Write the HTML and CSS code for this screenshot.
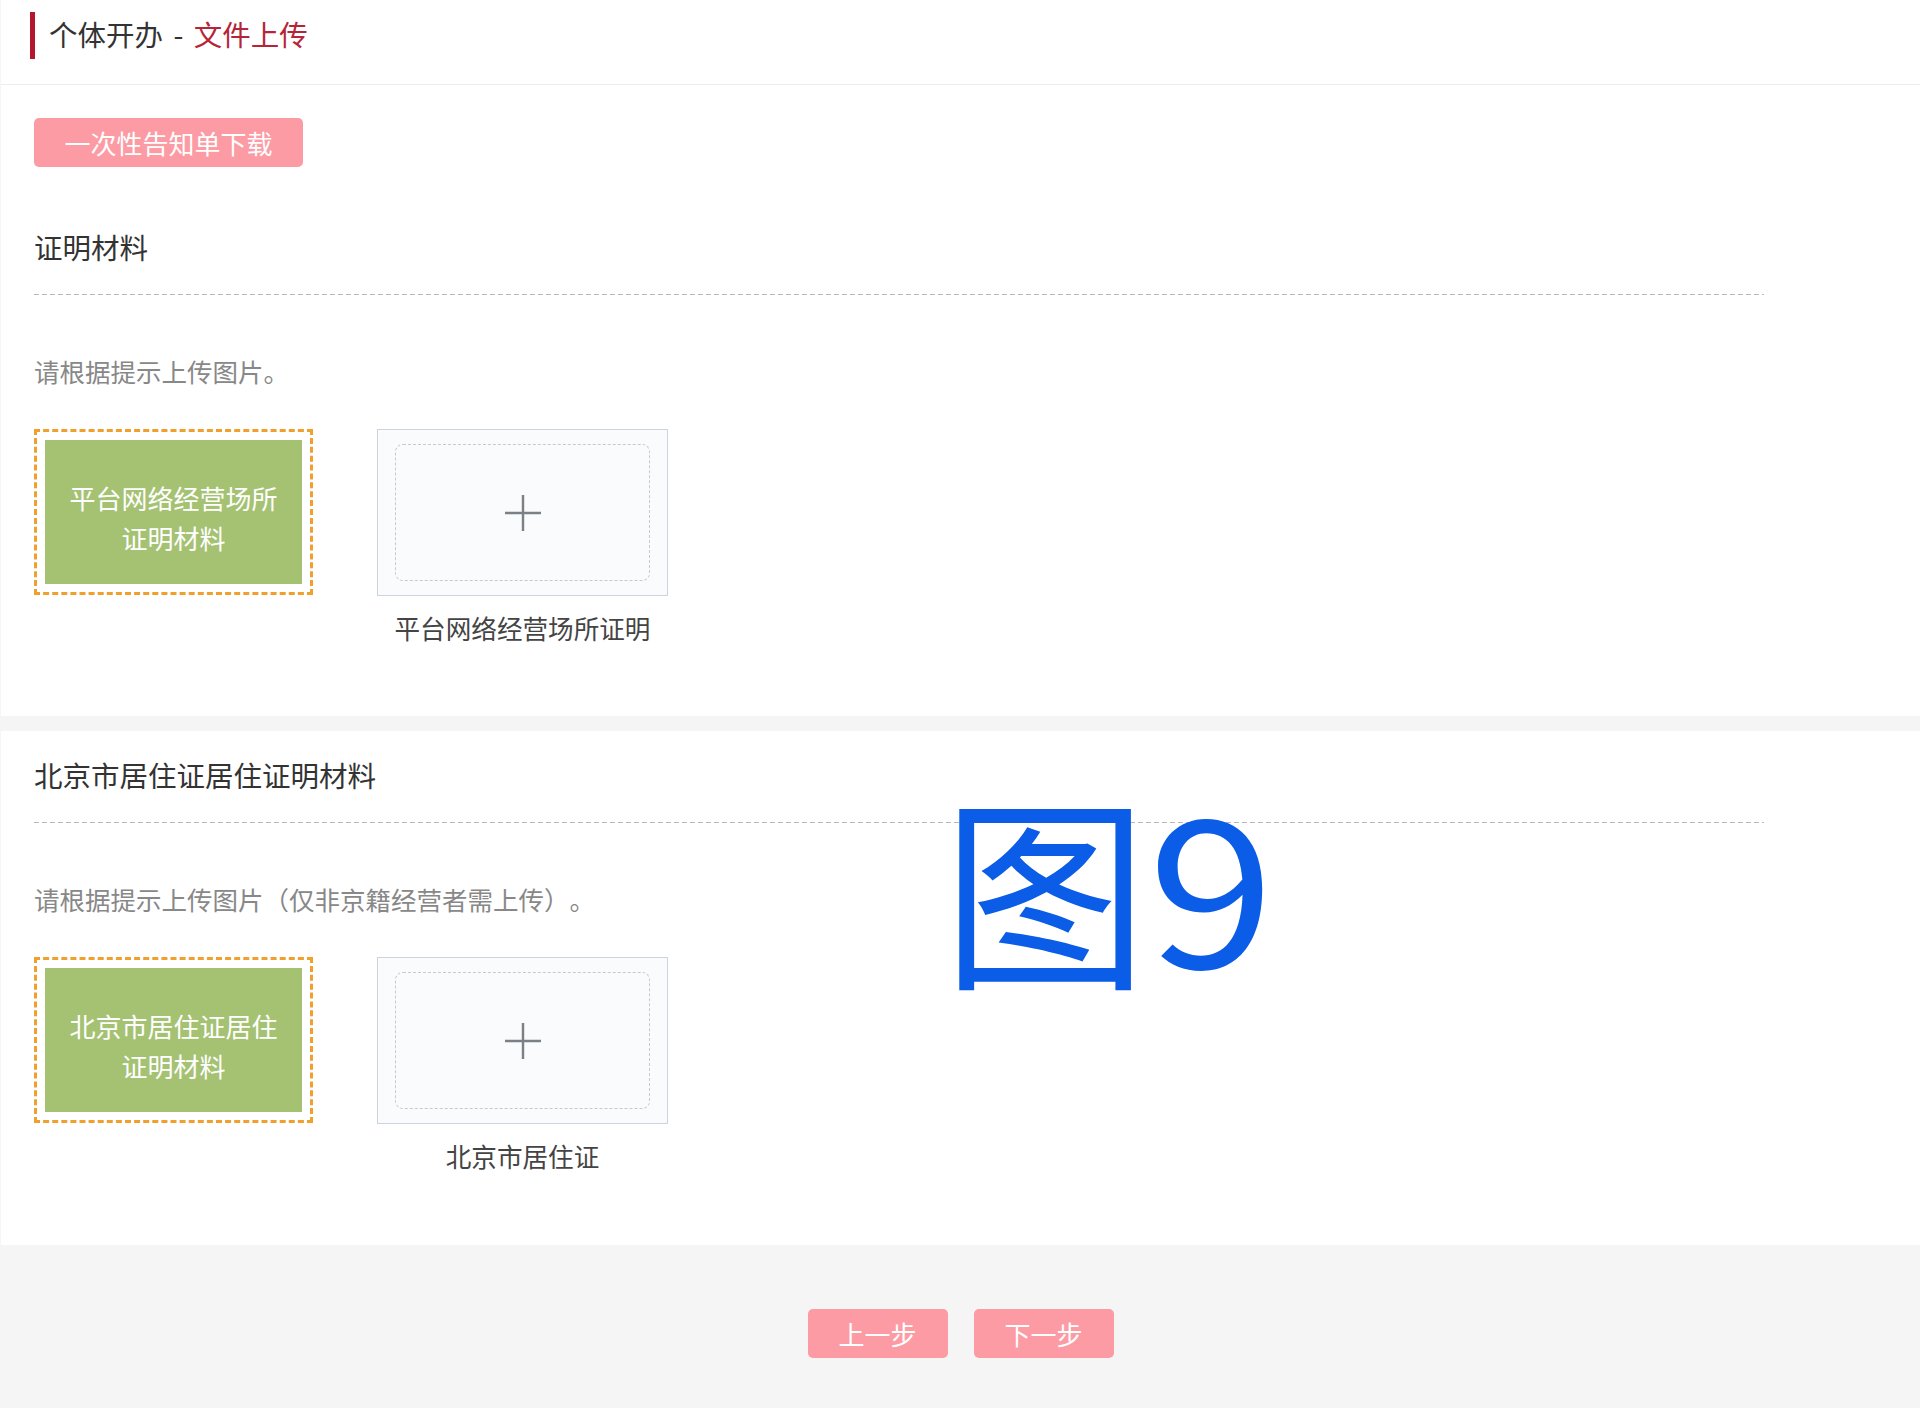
FILE: index.html
```html
<!DOCTYPE html>
<html lang="zh-CN">
<head>
<meta charset="utf-8">
<title>个体开办 - 文件上传</title>
<link rel="stylesheet" href="styles.css">
</head>
<body>
<div class="page">
  <header class="header">
    <span class="header-bar"></span>
    <h1 class="header-title">个体开办 - <span class="header-accent">文件上传</span></h1>
  </header>

  <section class="section section-first">
    <button class="btn-notice" type="button">一次性告知单下载</button>
    <div class="block">
      <h2 class="block-title">证明材料</h2>
      <div class="divider"></div>
      <p class="hint">请根据提示上传图片。</p>
      <div class="upload-row">
        <div class="sample">
          <div class="sample-inner">平台网络经营场所<br>证明材料</div>
        </div>
        <div class="uploader">
          <div class="upload-box">
            <div class="upload-dash">
              <svg class="plus" width="38" height="38" viewBox="0 0 38 38"><path d="M19 1v36M1 19h36" stroke="#7b7f86" stroke-width="2.4" fill="none"/></svg>
            </div>
          </div>
          <div class="upload-caption">平台网络经营场所证明</div>
        </div>
      </div>
    </div>
  </section>

  <section class="section section-second">
    <div class="block">
      <h2 class="block-title">北京市居住证居住证明材料</h2>
      <div class="divider"></div>
      <p class="hint">请根据提示上传图片（仅非京籍经营者需上传）。</p>
      <div class="upload-row">
        <div class="sample">
          <div class="sample-inner">北京市居住证居住<br>证明材料</div>
        </div>
        <div class="uploader">
          <div class="upload-box">
            <div class="upload-dash">
              <svg class="plus" width="38" height="38" viewBox="0 0 38 38"><path d="M19 1v36M1 19h36" stroke="#7b7f86" stroke-width="2.4" fill="none"/></svg>
            </div>
          </div>
          <div class="upload-caption">北京市居住证</div>
        </div>
      </div>
    </div>
  </section>

  <footer class="footer">
    <button class="btn-step" type="button">上一步</button>
    <button class="btn-step" type="button">下一步</button>
  </footer>

  <div class="figure-label">图<span class="figure-num">9</span></div>
</div>
</body>
</html>
```

FILE: styles.css
```css
* { box-sizing: border-box; }

html, body {
  margin: 0;
  padding: 0;
}

body {
  background: #f5f5f5;
  font-family: "Noto Sans CJK SC", "Microsoft YaHei", sans-serif;
  color: #333;
  width: 1920px;
  height: 1408px;
  overflow: hidden;
  text-spacing-trim: space-all;
}

.page {
  position: relative;
  margin-left: 1px;
  min-height: 1408px;
}

.header {
  height: 85px;
  background: #fff;
  border-bottom: 1px solid #ececec;
  display: flex;
  align-items: flex-start;
  padding: 12px 0 0 29px;
}

.header-bar {
  width: 5px;
  height: 47px;
  background: #b3172d;
  flex: none;
}

.header-title {
  margin: 0 0 0 14px;
  font-size: 28.5px;
  font-weight: normal;
  line-height: 44px;
  color: #333;
  word-spacing: 4px;
}

.header-accent {
  color: #b52537;
}

.section {
  background: #fff;
  padding: 0 156px 0 33px;
}

.section-first {
  padding-top: 33px;
  padding-bottom: 70px;
}

.section-second {
  margin-top: 15px;
  padding-top: 24px;
  padding-bottom: 71px;
}

.btn-notice {
  display: block;
  width: 269px;
  height: 49px;
  border: none;
  border-radius: 5px;
  background: #fc9ba4;
  color: #fff;
  font-family: inherit;
  font-size: 26px;
  line-height: 49px;
  padding: 0;
  margin: 0;
}

.section-first .block {
  margin-top: 60px;
}

.block-title {
  margin: 0;
  font-size: 28.5px;
  font-weight: normal;
  line-height: 40px;
  color: #333;
}

.divider {
  margin-top: 27px;
  height: 1px;
  background: repeating-linear-gradient(to right, #b9b9b9 0 5px, transparent 5px 8px);
}

.hint {
  margin: 58px 0 0;
  font-size: 25.5px;
  line-height: 36px;
  color: #888;
}

.upload-row {
  margin-top: 40px;
  display: flex;
  align-items: flex-start;
  gap: 64px;
}

.sample {
  width: 279px;
  height: 166px;
  border: 3px dashed #f0a02c;
  padding: 8px;
  flex: none;
}

.sample-inner {
  width: 100%;
  height: 100%;
  background: #a5c273;
  color: #fff;
  font-size: 26px;
  line-height: 40px;
  padding-top: 12px;
  text-align: center;
  display: flex;
  align-items: center;
  justify-content: center;
}

.uploader {
  width: 291px;
  flex: none;
  display: flex;
  flex-direction: column;
  align-items: center;
}

.upload-box {
  width: 291px;
  height: 167px;
  border: 1px solid #cbd3de;
  background: #f9fbfd;
  padding: 14px 17px 14px 17px;
}

.upload-dash {
  width: 100%;
  height: 100%;
  border: 1px dashed #c6c9cf;
  border-radius: 8px;
  display: flex;
  align-items: center;
  justify-content: center;
}

.plus {
  display: block;
}

.upload-caption {
  margin-top: 14px;
  font-size: 25.6px;
  line-height: 36px;
  color: #444;
  white-space: nowrap;
}

.footer {
  display: flex;
  justify-content: center;
  gap: 26px;
  padding-top: 64px;
}

.btn-step {
  width: 140px;
  height: 49px;
  border: none;
  border-radius: 5px;
  background: #fc9ba4;
  color: #fff;
  font-family: inherit;
  font-size: 26px;
  line-height: 49px;
  padding: 0;
}

.figure-label {
  position: absolute;
  left: 941px;
  top: 780px;
  font-size: 206px;
  line-height: 1;
  color: #0b5ce6;
  white-space: nowrap;
}

.figure-num {
  display: inline-block;
  position: relative;
  top: -5px;
  margin-left: 0;
  font-size: 200px;
  transform: scaleX(1.14);
  transform-origin: left center;
}
```
